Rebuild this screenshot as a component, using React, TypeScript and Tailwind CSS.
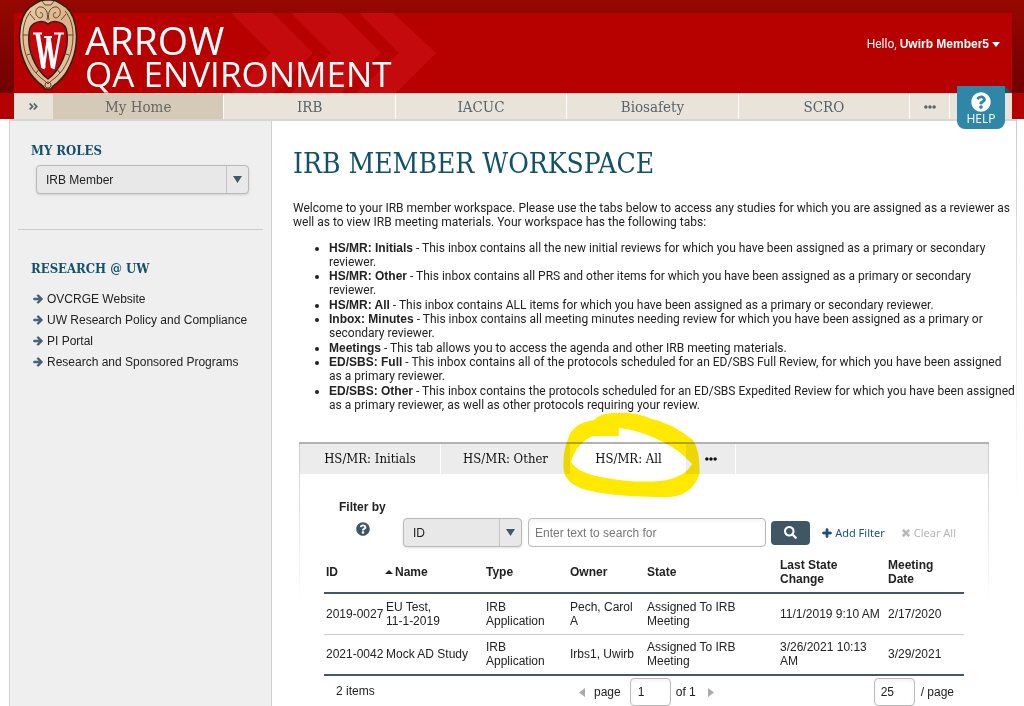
import React from "react";
import { FaAngleDoubleRight, FaArrowRight, FaEllipsisH, FaPlus, FaQuestionCircle, FaSearch, FaTimes } from "react-icons/fa";

const slab = "font-['Roboto_Slab','DejaVu_Serif_Condensed','DejaVu_Serif',serif]";
const strong = "font-['Liberation_Sans',Arial,sans-serif] font-bold";
const prose = "font-[Roboto,'Liberation_Sans',Arial,sans-serif]";

const modules = ["IRB", "IACUC", "Biosafety", "SCRO"];

const links = ["OVCRGE Website", "UW Research Policy and Compliance", "PI Portal", "Research and Sponsored Programs"];

const inboxes = [
  ["HS/MR: Initials", "This inbox contains all the new initial reviews for which you have been assigned as a primary or secondary reviewer."],
  ["HS/MR: Other", "This inbox contains all PRS and other items for which you have been assigned as a primary or secondary\nreviewer."],
  ["HS/MR: All", "This inbox contains ALL items for which you have been assigned as a primary or secondary reviewer."],
  ["Inbox: Minutes", "This inbox contains all meeting minutes needing review for which you have been assigned as a primary or secondary reviewer."],
  ["Meetings", "This tab allows you to access the agenda and other IRB meeting materials."],
  ["ED/SBS: Full", "This inbox contains all of the protocols scheduled for an ED/SBS Full Review, for which you have been assigned\nas a primary reviewer."],
  ["ED/SBS: Other", "This inbox contains the protocols scheduled for an ED/SBS Expedited Review for which you have been assigned\nas a primary reviewer, as well as other protocols requiring your review."],
];

const studies = [
  ["2019-0027", "EU Test,\n11-1-2019", "IRB Application", "Pech, Carol A", "Assigned To IRB Meeting", "11/1/2019 9:10 AM", "2/17/2020"],
  ["2021-0042", "Mock AD Study", "IRB Application", "Irbs1, Uwirb", "Assigned To IRB Meeting", "3/26/2021 10:13 AM", "3/29/2021"],
];

function Crest() {
  return (
    <svg viewBox="0 0 60 90" className="h-[90px] w-[60px]" aria-hidden="true">
      <defs>
        <linearGradient id="stone" x1="0" y1="0" x2="1" y2="1">
          <stop offset="0" stopColor="#e8cfae" />
          <stop offset="0.5" stopColor="#d9b48b" />
          <stop offset="1" stopColor="#e6cba8" />
        </linearGradient>
      </defs>
      <path d="M30 0C22 -1 19 3 12 7C5 13 2 23 1.500 35C1 52 8 72 20 82C23 85 26 86 27 89H33C34 86 37 85 40 82C52 72 59 52 58.500 35C58 23 55 13 48 7C41 3 38 -1 30 0Z" fill="url(#stone)" stroke="#3b1c12" strokeWidth="1.600" />
      <path d="M30 24C26 20 12 20 11 33C9 50 17 69 30 79C43 69 51 50 49 33C48 20 34 20 30 24Z" fill="#c5050c" stroke="#3b1c12" strokeWidth="1.500" />
      <g fill="none" stroke="#5a3a26" strokeWidth="0.900">
        <path d="M13 11C7 18 5 27 5 36C5 53 12 69 23 78C26 80 28 82 30 84C32 82 34 80 37 78C48 69 55 53 55 36C55 27 53 18 47 11" />
        <path d="M29 20C31 12 27 6 21 7C16 9 17 17 22 18C26 18 25 11 22 13" />
        <path d="M31 20C29 12 33 6 39 7C44 9 43 17 38 18C34 18 35 11 38 13" />
        <path d="M24 1L27 5H33L36 1M12 14L17 20M48 14L43 20M5 35H10M55 35H50M9 55L15 53M51 55L45 53M18 73L22 68M42 73L38 68" />
        <circle cx="30" cy="85" r="3" />
      </g>
      <g fill="none" stroke="#fff">
        <path d="M15 33.500H24M36 33.500H46M26 37H34" strokeWidth="2.200" />
        <path d="M19.500 33L25.500 68M30.500 38L35 68" strokeWidth="4.400" />
        <path d="M25.500 69L30 38M35.500 69L42 33" strokeWidth="2.400" />
      </g>
    </svg>
  );
}

function Triangle({ d, className }: { d: string; className: string }) {
  return <svg viewBox="0 0 10 10" preserveAspectRatio="none" className={className} aria-hidden="true"><path d={d} fill="currentColor" /></svg>;
}

function Picker({ id, options, label }: { id: string; options: string[]; label: string }) {
  return (
    <div className="relative w-full">
      <select id={id} aria-label={label} className="h-[29px] w-full appearance-none rounded-[4px] border border-[#b9b9b9] bg-[#e8e8e8] pl-[9px] text-[12px] text-[#222] shadow-sm">
        {options.map((o) => <option key={o}>{o}</option>)}
      </select>
      <span className="pointer-events-none absolute inset-y-px right-px flex w-[22px] items-center justify-center border-l border-[#c6c6c6] text-[#3d5a6b]">
        <Triangle d="M0 0H10L5 10Z" className="h-[7px] w-[9px]" />
      </span>
    </div>
  );
}

function Header() {
  return (
    <header className="relative bg-[#b30000]">
      <div className="bg-linear-to-b from-[#960900] to-[#700000] px-[14px] pr-3 pt-[13px]">
        <div className="relative flex h-20 justify-between bg-[#b70101]">
          <svg viewBox="0 0 210 80" className="absolute left-[217px] top-0 h-20 w-[210px]" aria-hidden="true">
            <g fill="#c40a0c">
              <path d="M0 0H42L82 40L42 80H0L40 40Z" />
              <path d="M60 0H110L150 40L110 80H60L100 40Z" />
              <path d="M128 0H162L205 40L165 80H125L168 40Z" />
            </g>
          </svg>
          <a href="#home" className="relative -mt-[13px] flex pl-1 text-white">
            <Crest />
            <span className="flex flex-col pl-[7px] pt-[21px] font-['Open_Sans',sans-serif]">
              <span className="text-[39px] leading-[38px]">ARROW</span>
              <span className="text-[35px] leading-[30px]">QA ENVIRONMENT</span>
            </span>
          </a>
          <button className="relative mr-3 mt-[23px] flex h-4 items-center gap-[3px] text-[12px] text-white">
            <span className={prose}>Hello, <b className={strong}>Uwirb Member5</b></span>
            <Triangle d="M0 0H10L5 10Z" className="h-[5px] w-2" />
          </button>
        </div>
      </div>
      <nav className={`${slab} mr-3 ml-[14px] flex h-[26px] border-t border-[#f2c9c0] bg-[#eae3da] text-[15px] text-[#56646c]`}>
        <button aria-label="Expand" className="flex w-[39px] items-center justify-center"><FaAngleDoubleRight size={11} /></button>
        <a href="#home" className="flex flex-1 items-center justify-center border-r border-white bg-[#d5c9b8] text-[#666]">My Home</a>
        {modules.map((m) => <a key={m} href={`#${m}`} className="flex flex-1 items-center justify-center border-r border-white">{m}</a>)}
        <button aria-label="More" className="flex w-10 items-center justify-center border-r border-white"><FaEllipsisH size={12} /></button>
        <span className="w-[62px]" />
      </nav>
      <Triangle d="M0 0L10 10H0Z" className="absolute right-3 top-[86px] h-[7px] w-[7px] text-[#1c5266]" />
      <a href="#help" className="absolute right-[19px] top-[86px] z-10 flex h-[43px] w-12 flex-col items-center rounded-b-[8px] bg-[#2f86a6] pt-[6px] text-[12px] leading-[14px] text-white">
        <FaQuestionCircle size={20} />
        <span className="font-['Open_Sans',sans-serif]">HELP</span>
      </a>
    </header>
  );
}

function Sidebar() {
  return (
    <aside className="w-[263px] shrink-0 border-x border-[#d0d0d0] bg-[#efefef] px-2 pt-[21px]">
      <label htmlFor="role" className={`${slab} block pl-[13px] text-[13px] leading-[18px] font-bold text-[#125169]`}>MY ROLES</label>
      <div className="mt-[5px] pl-[18px] pr-[14px]"><Picker id="role" label="My roles" options={["IRB Member"]} /></div>
      <hr className="mt-[35px] border-[#ccc]" />
      <h2 className={`${slab} mt-[30px] pl-[13px] text-[13px] leading-[18px] font-bold text-[#125169]`}>RESEARCH @ UW</h2>
      <ul className="mt-[10px] pl-[15px]">
        {links.map((l) => (
          <li key={l}><a href="#link" className="flex h-[21px] items-center gap-1 text-[#222]"><FaArrowRight size={10} className="stroke-current stroke-[50] text-[#3f5b6c]" />{l}</a></li>
        ))}
      </ul>
    </aside>
  );
}

function Highlight() {
  return (
    <svg viewBox="845 30 425 270" className="pointer-events-none absolute -left-[10px] -top-[34px] h-[90px] w-[142px] mix-blend-multiply" aria-hidden="true">
      <path fillRule="evenodd" fill="#ffe900" d="M865 120Q875 70 945 60Q960 38 1020 38Q1080 38 1110 55Q1180 70 1240 120Q1262 150 1260 220Q1240 290 1160 292Q1000 290 920 270Q850 250 852 200Q850 150 865 120ZM1018 108V84Q1080 90 1150 125Q1200 150 1238 192Q1215 235 1140 243Q1060 250 960 230Q890 215 875 185Q890 130 940 108Z" />
    </svg>
  );
}

function Inbox() {
  return (
    <section className="mx-[6px] mt-[30px] border-t-2 border-[#b2b2b2]">
      <div className="border-x [border-image:linear-gradient(#ccc,transparent_60%)_1]">
        <div role="tablist" className={`${slab} flex h-[30px] bg-[#ececec] text-[13px] text-[#111]`}>
          <button role="tab" className="w-[141px] border-r border-white">HS/MR: Initials</button>
          <button role="tab" className="w-[130px] border-r border-white">HS/MR: Other</button>
          <div className="relative w-[115px]">
            <button role="tab" aria-selected="true" className="h-full w-full bg-white">HS/MR: All</button>
            <Highlight />
          </div>
          <button aria-label="More tabs" className="flex w-[50px] items-center justify-center border-r border-white"><FaEllipsisH size={12} /></button>
        </div>
        <div className="px-6 pt-6">
          <label htmlFor="field" className={`${strong} block pl-[15px] leading-[18px]`}>Filter by</label>
          <div className="mt-[2px] flex items-center">
            <FaQuestionCircle size={14} className="mb-2 ml-8 shrink-0 text-[#3d5566]" />
            <div className="ml-[33px] w-[119px] shrink-0"><Picker id="field" label="Filter field" options={["ID"]} /></div>
            <input aria-label="Search text" placeholder="Enter text to search for" className="ml-[6px] h-[29px] min-w-0 flex-1 rounded-[4px] border border-[#b9b9b9] bg-white px-[6px] text-[12px] shadow-inner placeholder:text-[#777]" />
            <button aria-label="Search" className="ml-[5px] flex h-6 w-[39px] items-center justify-center rounded-[4px] bg-[#3f5765] text-white"><FaSearch size={13} /></button>
            <button className="ml-3 flex items-center gap-[3px] font-['Noto_Sans',sans-serif] text-[11px] text-[#1c4f7c]"><FaPlus size={10} className="stroke-current stroke-[50]" />Add Filter</button>
            <button className="mr-2 ml-4 flex items-center gap-[3px] font-['Noto_Sans',sans-serif] text-[11px] text-[#b5b5b5]"><FaTimes size={10} className="stroke-current stroke-[50]" />Clear All</button>
          </div>
          <table className="mt-1 w-full table-fixed border-b-2 border-[#44586a] text-left leading-[14px]">
            <colgroup>
              <col className="w-[61px]" /><col className="w-[100px]" /><col className="w-[84px]" /><col className="w-[77px]" /><col className="w-[133px]" /><col className="w-[108px]" /><col />
            </colgroup>
            <thead>
              <tr className="h-[42px] border-b-2 border-[#44586a]">
                <th className="pl-[2px]">ID</th>
                <th><span className="flex items-center gap-[2px]"><Triangle d="M0 10H10L5 0Z" className="h-1 w-2" />Name</span></th>
                <th className="pl-px">Type</th>
                <th className="pl-px">Owner</th>
                <th className="pl-px">State</th>
                <th className="pr-8 pl-px">Last State Change</th>
                <th className="pr-5 pl-px">Meeting Date</th>
              </tr>
            </thead>
            <tbody>
              {studies.map((row) => (
                <tr key={row[0]} className="h-[41px] border-b border-[#ccc] last:border-b-0">
                  {row.map((cell, i) => <td key={i} className={i === 0 ? "pl-[2px] whitespace-nowrap" : i === 5 ? "pl-px" : "pr-2 pl-px whitespace-pre-line"}>{cell}</td>)}
                </tr>
              ))}
            </tbody>
          </table>
          <div className="flex items-start pt-[2px]">
            <span className="w-[255px] pt-1 pl-3 leading-[18px]">2 items</span>
            <div className="flex items-center">
              <button aria-label="Previous page" className="text-[#aaa]"><Triangle d="M10 0V10L0 5Z" className="h-[9px] w-[6px]" /></button>
              <label htmlFor="page" className="ml-[9px]">page</label>
              <input id="page" defaultValue="1" className="mr-[5px] ml-[9px] h-7 w-[41px] rounded-[4px] border border-[#bbb] px-[7px] shadow-inner" />
              <span>of 1</span>
              <button aria-label="Next page" className="ml-3 text-[#aaa]"><Triangle d="M0 0V10L10 5Z" className="h-[9px] w-[6px]" /></button>
            </div>
            <label className="mr-[10px] ml-auto flex items-center gap-[6px]">
              <input aria-label="Rows per page" defaultValue="25" className="h-7 w-[41px] rounded-[4px] border border-[#bbb] px-[6px] shadow-inner" />
              / page
            </label>
          </div>
        </div>
      </div>
    </section>
  );
}

export default function App() {
  return (
    <div className="flex min-h-screen flex-col bg-white font-['Liberation_Sans',Arial,sans-serif] text-[12px] leading-[14px] text-[#222]">
      <Header />
      <div className="mr-[7px] ml-[9px] flex flex-1 border-t-2 border-[#d5d5d5]">
        <Sidebar />
        <main className="min-w-0 flex-1 border-r [border-image:linear-gradient(#ccc,transparent_65%)_1] px-[21px] pt-[26px]">
          <h1 className={`${slab} text-[28px] leading-[34px] text-[#125169]`}>IRB MEMBER WORKSPACE</h1>
          <div className={`${prose} -mr-5`}>
            <p className="mt-5">Welcome to your IRB member workspace. Please use the tabs below to access any studies for which you are assigned as a reviewer as well as to view IRB meeting materials. Your workspace has the following tabs:</p>
            <ul className="mt-3 list-disc pl-9">
              {inboxes.map(([name, text]) => <li key={name} className="whitespace-pre-line even:mb-px"><b className={strong}>{name}</b> - {text}</li>)}
            </ul>
          </div>
          <Inbox />
        </main>
      </div>
    </div>
  );
}
